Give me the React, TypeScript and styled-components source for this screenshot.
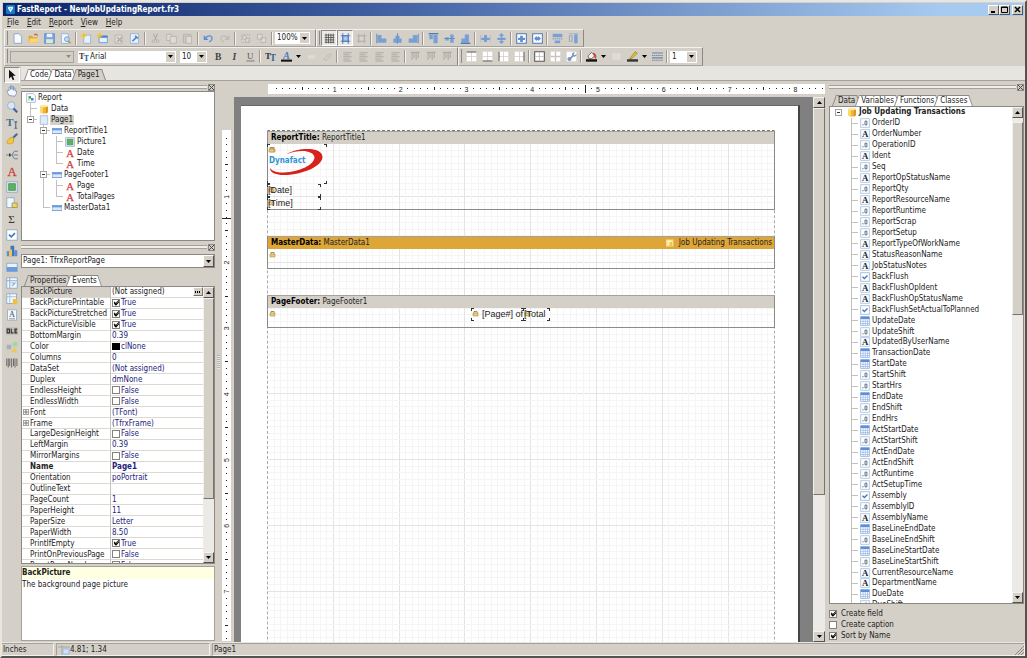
import React from 'react';
import styled, { createGlobalStyle, css } from 'styled-components';

const UI_FONT = '"DejaVu Sans Condensed", "DejaVu Sans", sans-serif';
const FACE = '#d4d0c8';
const INCH = 65.8;

const GlobalStyle = createGlobalStyle`
  *, *::before, *::after { box-sizing: border-box; }
  html, body { margin: 0; padding: 0; height: 100%; overflow: hidden; }
  body, button, input, select { font-family: ${UI_FONT}; font-size: 8px; line-height: 10px; color: #222; }
  button, select { margin: 0; padding: 0; border: 0; background: none; }
  #root { height: 100%; }
`;

/* ---------- window frame ---------- */

const Window = styled.div`
  height: 100vh;
  display: flex;
  flex-direction: column;
  background: ${FACE};
  border: 2px solid #e8e6e1;
  border-right: 2px solid #55534f;
  border-bottom: 2px solid #55534f;
  overflow: hidden;
`;

const TitleBar = styled.header`
  flex: none;
  height: 13px;
  margin: 1px 1px 0;
  padding-left: 3px;
  display: flex;
  align-items: center;
  gap: 2px;
  background: linear-gradient(90deg, #0b2569, #3c5c9f 35%, #a6caf0 92%);
`;

const WindowTitle = styled.h1`
  flex: 1;
  margin: 0;
  font-size: 8px;
  line-height: 12px;
  font-weight: bold;
  color: #fff;
`;

const CaptionButtons = styled.div`
  display: flex;
  padding-right: 1px;
`;

const CaptionButton = styled.button<{ $apart?: boolean }>`
  width: 11px;
  height: 10px;
  margin-left: ${(p) => (p.$apart ? '2px' : '0')};
  display: flex;
  align-items: center;
  justify-content: center;
  background: ${FACE};
  border: 1px solid;
  border-color: #fff #55534f #55534f #fff;
`;

const MenuBar = styled.nav`
  flex: none;
  height: 13px;
  padding-left: 5px;
  display: flex;
  align-items: center;
  gap: 8px;
  u { text-underline-offset: 1px; }
`;

/* ---------- toolbars ---------- */

const ToolbarRow = styled.div<{ $h: number }>`
  flex: none;
  height: ${(p) => p.$h}px;
  padding-left: 2px;
  display: flex;
`;

const Toolbar = styled.div`
  display: flex;
  align-items: center;
  padding: 0 2px 0 4px;
  border: 1px solid;
  border-color: #f4f2ee #8c8984 #a5a29c #f4f2ee;
  background: linear-gradient(#8c8984, #8c8984) 2px 1px / 1px 14px no-repeat;
`;

const ToolButton = styled.button<{ $down?: boolean; $off?: boolean }>`
  width: 16px;
  height: 16px;
  flex: none;
  display: flex;
  align-items: center;
  justify-content: center;
  opacity: ${(p) => (p.$off ? 0.4 : 1)};
  ${(p) =>
    p.$down &&
    css`
      background: #eceae6;
      border: 1px solid;
      border-color: #8c8984 #fff #fff #8c8984;
    `}
`;

const DropButton = styled.button`
  width: 9px;
  height: 16px;
  display: flex;
  align-items: center;
  justify-content: center;
`;

const Separator = styled.span<{ $wide?: boolean }>`
  flex: none;
  width: 2px;
  height: 13px;
  margin: ${(p) => (p.$wide ? '0 1px 0 2px' : '0 1px')};
  background: #9c9994;
  border-right: 1px solid #f4f2ee;
`;

const SelectBox = styled.span<{ $w?: number; $disabled?: boolean }>`
  flex: ${(p) => (p.$w ? 'none' : '1')};
  width: ${(p) => (p.$w ? `${p.$w}px` : 'auto')};
  height: 12px;
  margin: 0 3px 0 1px;
  display: flex;
  align-items: center;
  background: ${(p) => (p.$disabled ? FACE : '#fff')};
  border: 1px solid ${(p) => (p.$disabled ? '#a5a29c' : '#fff')};
  select {
    flex: 1;
    min-width: 0;
    height: 10px;
    padding-left: 1px;
    appearance: none;
    outline: none;
  }
`;

const SelectArrow = styled.span`
  flex: none;
  width: 9px;
  height: 10px;
  display: flex;
  align-items: center;
  justify-content: center;
  background: ${FACE};
`;

/* ---------- tabs ---------- */

const TabStrip = styled.div`
  flex: none;
  display: flex;
  align-items: flex-end;
  padding-left: 6px;
`;

const Tab = styled.button<{ $active?: boolean }>`
  position: relative;
  height: 11px;
  padding: 0 3px;
  line-height: 11px;
  z-index: 0;
  white-space: nowrap;
  &::before, &::after {
    content: '';
    position: absolute;
    z-index: -1;
    top: 0;
    bottom: 0;
    background: ${(p) => (p.$active ? FACE : '#fff')};
    border: 1px solid #8c8984;
    border-bottom: 0;
  }
  &::before { left: -1px; right: 3px; border-right: 0; transform: skewX(-20deg); }
  &::after { left: 3px; right: -1px; border-left: 0; transform: skewX(20deg); }
`;

/* ---------- body ---------- */

const Body = styled.main`
  flex: 1;
  min-height: 0;
  display: flex;
`;

const ToolColumn = styled.aside`
  flex: none;
  width: 19px;
  padding: 1px 0 0 2px;
`;

const ToolStack = styled.div`
  height: 299px;
  display: flex;
  flex-direction: column;
  justify-content: space-between;
`;

const Right = styled.div`
  flex: 1;
  min-width: 0;
  display: flex;
  flex-direction: column;
`;

const DocTabs = styled(TabStrip)`
  height: 15px;
  background: #e7e5e0;
  border-bottom: 1px solid #a5a29c;
`;

const Panels = styled.div`
  flex: 1;
  min-height: 0;
  display: flex;
  padding-right: 1px;
`;

const SidePanel = styled.section<{ $w: number }>`
  flex: none;
  width: ${(p) => p.$w}px;
  display: flex;
  flex-direction: column;
`;

const PanelSpacer = styled.div<{ $h?: number }>`
  flex: none;
  height: ${(p) => p.$h ?? 2}px;
`;

const PanelGap = styled.div`
  flex: none;
  width: 4px;
`;

const Grip = styled.div`
  flex: none;
  height: 8px;
  display: flex;
  align-items: center;
  gap: 1px;
  &::before {
    content: '';
    flex: 1;
    height: 4px;
    border-top: 1px solid #a5a29c;
    border-bottom: 1px solid #a5a29c;
    background: #f0eeea;
  }
  button {
    width: 7px;
    height: 7px;
    display: flex;
    border: 1px solid #8c8984;
    align-items: center;
    justify-content: center;
  }
`;

const Sunken = styled.div<{ $h?: number }>`
  flex: ${(p) => (p.$h ? 'none' : '1')};
  height: ${(p) => (p.$h ? `${p.$h}px` : 'auto')};
  min-height: 0;
  display: flex;
  overflow: hidden;
  background: #fff;
  border: 1px solid #8c8984;
`;

const Tree = styled.ul<{ $h?: number }>`
  flex: 1;
  height: ${(p) => (p.$h ? `${p.$h}px` : 'auto')};
  margin: 0;
  padding: 0 0 0 2px;
  list-style: none;
  display: flex;
  flex-direction: column;
`;

const TreeRow = styled.li<{ $fixed?: boolean }>`
  flex: ${(p) => (p.$fixed ? '0 0 11px' : '1 1 0')};
  min-height: 0;
  display: flex;
  align-items: center;
  white-space: nowrap;
`;

const line = 'linear-gradient(#c4c1bb, #c4c1bb)';
const guides: Record<string, string> = {
  ' ': 'none',
  v: `${line} 6px 0 / 1px 100% no-repeat`,
  t: `${line} 6px 0 / 1px 100% no-repeat, ${line} 6px 5px / 7px 1px no-repeat`,
  l: `${line} 6px 0 / 1px 6px no-repeat, ${line} 6px 5px / 7px 1px no-repeat`,
};

const Guide = styled.span<{ $kind: string }>`
  flex: none;
  width: 13px;
  align-self: stretch;
  display: flex;
  align-items: center;
  justify-content: center;
  background: ${(p) => guides[p.$kind]};
`;

const Expander = styled.button`
  width: 7px;
  height: 7px;
  display: flex;
  align-items: center;
  justify-content: center;
  background: #fff;
  border: 1px solid #a5a29c;
`;

const TreeIcon = styled.span`
  flex: none;
  width: 13px;
  display: flex;
  justify-content: center;
`;

const TreeLabel = styled.span<{ $selected?: boolean; $bold?: boolean }>`
  padding: 0 1px;
  background: ${(p) => (p.$selected ? FACE : 'transparent')};
  font-weight: ${(p) => (p.$bold ? 'bold' : 'normal')};
`;

/* ---------- inspector ---------- */

const ObjectSelect = styled(SelectBox)`
  flex: none;
  height: 14px;
  margin: 3px 0 7px;
  border: 1px solid #8c8984;
  ${SelectArrow} {
    width: 11px;
    height: 12px;
    border: 1px solid;
    border-color: #fff #55534f #55534f #fff;
  }
`;

const GridClip = styled.div`
  flex: 1;
  min-width: 0;
  overflow: hidden;
`;

const PropertyTable = styled.table`
  width: 100%;
  height: 284px;
  table-layout: fixed;
  border-collapse: separate;
  border-spacing: 0;
`;

const PropName = styled.th<{ $selected?: boolean; $bold?: boolean }>`
  width: 89px;
  padding: 0;
  text-align: left;
  line-height: 9px;
  white-space: nowrap;
  font-weight: ${(p) => (p.$bold ? 'bold' : 'normal')};
  background: ${(p) => (p.$selected ? FACE : '#fff')};
  border-bottom: 1px solid #dcd9d3;
  border-right: 1px solid #c4c1bb;
  > span { display: flex; align-items: center; }
`;

const PropGutter = styled.span`
  flex: none;
  width: 8px;
  height: 9px;
  display: flex;
  align-items: center;
  padding-left: 1px;
`;

const PlusBox = styled(Expander)`
  width: 6px;
  height: 6px;
`;

const PropValue = styled.td<{ $selected?: boolean; $bold?: boolean }>`
  padding: 0 0 0 1px;
  line-height: 9px;
  white-space: nowrap;
  color: ${(p) => (p.$selected ? '#222' : '#23237c')};
  font-weight: ${(p) => (p.$bold ? 'bold' : 'normal')};
  border-bottom: 1px solid #dcd9d3;
  > span { display: flex; align-items: center; gap: 1px; }
`;

const Ellipsis = styled.button`
  width: 10px;
  height: 9px;
  margin-left: auto;
  display: flex;
  align-items: center;
  justify-content: center;
  background: ${FACE};
  border: 1px solid;
  border-color: #fff #77746f #77746f #fff;
`;

const Swatch = styled.i`
  width: 8px;
  height: 7px;
  background: #000;
`;

const Check = styled.input`
  position: relative;
  flex: none;
  appearance: none;
  width: 8px;
  height: 8px;
  margin: 0;
  background: #fff;
  border: 1px solid #85827d;
  &:checked::after {
    content: '';
    position: absolute;
    left: 1px;
    top: 0;
    width: 5px;
    height: 3px;
    border-left: 1px solid #000;
    border-bottom: 1px solid #000;
    transform: rotate(-48deg);
    box-shadow: -1px 1px 0 0 #000;
  }
`;

const Hint = styled.div`
  flex: none;
  height: 75px;
  margin: 2px 0 1px;
  background: #fff;
  border: 1px solid #a5a29c;
  h2 {
    margin: 0;
    height: 12px;
    font-size: 8px;
    line-height: 12px;
    background: #ffffe1;
  }
  p { margin: 0; line-height: 11px; }
`;

/* ---------- scroll bar ---------- */

const ScrollTrack = styled.div<{ $w: number }>`
  flex: none;
  width: ${(p) => p.$w}px;
  display: flex;
  flex-direction: column;
  background: #eceae6;
`;

const ScrollButton = styled.button`
  flex: none;
  height: 11px;
  display: flex;
  align-items: center;
  justify-content: center;
  background: ${FACE};
  border: 1px solid;
  border-color: #f4f2ee #55534f #55534f #f4f2ee;
`;

const ScrollThumb = styled.div<{ $top: number; $size: number }>`
  flex: ${(p) => `0 0 ${p.$size}%`};
  margin-top: ${(p) => p.$top}px;
  background: ${FACE};
  border: 1px solid;
  border-color: #f4f2ee #77746f #77746f #f4f2ee;
`;

const ScrollRest = styled.div`
  flex: 1;
`;

/* ---------- designer ---------- */

const Splitter = styled.div`
  flex: none;
  width: 7px;
  display: flex;
  align-items: center;
  justify-content: center;
  &::before {
    content: '';
    width: 3px;
    height: 14px;
    background: repeating-linear-gradient(#b5b2ac 0 1px, #e8e6e1 1px 2px);
  }
`;

const Designer = styled.section`
  flex: 1;
  min-width: 0;
  display: flex;
  flex-direction: column;
  padding: 3px 0 0;
`;

const HRuler = styled.div`
  flex: none;
  height: 10px;
  margin: 0 0 3px 46px;
  background: #fff;
  overflow: hidden;
`;

const DesignerBody = styled.div`
  flex: 1;
  min-height: 0;
  display: flex;
`;

const VRuler = styled.div`
  flex: none;
  width: 9px;
  margin: 33px 3px 1px 0;
  background: #fff;
  overflow: hidden;
`;

const Workspace = styled.div`
  flex: 1;
  min-width: 0;
  padding: 8px 0 0 7px;
  background: #808080;
  overflow: hidden;
`;

const Paper = styled.article`
  width: 559px;
  height: 724px;
  padding: 24px 25px 25px 26px;
  background: #fff;
  border-right: 2px solid #444;
  border-top: 1px solid #666;
`;

const Printable = styled.div`
  position: relative;
  width: 508px;
  height: 670px;
  border: 1px dashed #aaa;
  border-top-color: #777;
`;

const GridLines = styled.svg`
  position: absolute;
  inset: 0;
  width: 100%;
  height: 100%;
`;

const BandStack = styled.div`
  position: relative;
  display: flex;
  flex-direction: column;
  gap: 26px;
  margin: 0 -1px;
`;

const BandBox = styled.section<{ $h: number }>`
  height: ${(p) => p.$h}px;
  border: 1px solid #8a8a8a;
  border-top-color: #a5a29c;
`;

const BandHeader = styled.header<{ $master?: boolean }>`
  height: 12px;
  padding: 0 2px 0 3px;
  display: flex;
  align-items: center;
  line-height: 12px;
  background: ${(p) => (p.$master ? '#dea636' : FACE)};
  b { color: #000; }
`;

const BandData = styled.span`
  margin-left: auto;
  display: flex;
  align-items: center;
  gap: 5px;
`;

const BandBody = styled.div`
  position: relative;
`;

const k = 'linear-gradient(#333, #333)';
const ReportObject = styled.div<{ $x: number; $y: number; $w: number; $h: number }>`
  position: absolute;
  left: ${(p) => p.$x}px;
  top: ${(p) => p.$y}px;
  width: ${(p) => p.$w}px;
  height: ${(p) => p.$h}px;
  font-family: "Liberation Sans", Arial, sans-serif;
  font-size: 9px;
  line-height: 13px;
  white-space: nowrap;
  background:
    ${k} 0 0 / 3px 1px, ${k} 0 0 / 1px 3px,
    ${k} 100% 0 / 3px 1px, ${k} 100% 0 / 1px 3px,
    ${k} 0 100% / 3px 1px, ${k} 0 100% / 1px 3px,
    ${k} 100% 100% / 3px 1px, ${k} 100% 100% / 1px 3px;
  background-repeat: no-repeat;
`;

const ObjectText = styled.span<{ $pad: number }>`
  position: relative;
  display: block;
  padding-left: ${(p) => p.$pad}px;
`;

const LockMark = styled.svg`
  position: absolute;
  left: 1px;
  top: 2px;
`;

/* ---------- right panel ---------- */

const Options = styled.div`
  flex: none;
  padding: 4px 0 1px;
  display: flex;
  flex-direction: column;
`;

const Option = styled.label`
  height: 11px;
  display: flex;
  align-items: center;
  gap: 4px;
`;

/* ---------- status bar ---------- */

const StatusBar = styled.footer`
  flex: none;
  height: 14px;
  display: flex;
  align-items: stretch;
  gap: 2px;
  border-top: 1px solid #e8e6e1;
`;

const StatusCell = styled.div<{ $w?: number }>`
  flex: ${(p) => (p.$w ? 'none' : '1')};
  width: ${(p) => (p.$w ? `${p.$w}px` : 'auto')};
  display: flex;
  align-items: center;
  padding-left: 1px;
  border: 1px solid;
  border-color: #a5a29c #f4f2ee #f4f2ee #a5a29c;
  &:first-child { border-left: 0; }
`;

const Sizer = styled.svg`
  margin-left: auto;
  align-self: flex-end;
`;

/* ---------- icons ---------- */

const B = '#5b8fdc';
const L = '#a9c8f2';
const G = '#77746f';
const SERIF = 'Liberation Serif, serif';

const art: Record<string, React.ReactNode> = {
  app: <><rect width="16" height="16" rx="2" fill="#1878c8" /><path d="M3 5l2-2h6l2 2-5 8z" fill="#fff" /><path d="M5 5h6L8 9z" fill="#6bd0f5" /></>,
  page: <path d="M3 1h7l4 4v10H3z" fill="#f5faff" stroke="#6f93bf" />,
  open: <><path d="M1 4h5l1 2h7v8H1z" fill="#e2a73a" /><path d="M3 8h13l-3 6H1z" fill="#ffd66e" /><path d="M9 3c2-2 4-1 5 1" stroke="#d06f28" strokeWidth="2" fill="none" /></>,
  save: <><path d="M1 1h14v14H1z" fill="#78a9e6" stroke="#4b7cbd" /><path d="M4 1h8v5H4z" fill="#e9f3ff" /><path d="M3 9h10v6H3z" fill="#d9ead0" /></>,
  preview: <><path d="M2 1h10v14H2z" fill="#eef6ff" stroke="#7fa3cf" /><circle cx="10" cy="9" r="3.500" fill="#bcdcff" stroke="#6688aa" /><path d="M12.500 12l3 3" stroke="#c08a30" strokeWidth="2" /></>,
  newpage: <><path d="M4 3h10v12H4z" fill="#e6f1ff" stroke="#7fa3cf" /><path d="M4 0l1 3 3 1-3 1-1 3-1-3-3-1 3-1z" fill="#f5c518" stroke="#f5c518" /></>,
  newdlg: <><path d="M3 4h12v10H3z" fill="#e6f1ff" stroke="#4e84cf" /><path d="M3 4h12v3H3z" fill="#4e84cf" /><path d="M4 0l1 3 3 1-3 1-1 3-1-3-3-1 3-1z" fill="#f5c518" stroke="#f5c518" /></>,
  delpage: <><path d="M3 3h10v12H3z" fill="#eee" stroke={G} /><path d="M6 6l7 7M13 6l-7 7" stroke={G} strokeWidth="2" /></>,
  pageset: <><path d="M2 1h12v14H2z" fill="#e6f1ff" stroke="#86a5cc" /><path d="M5 12l6-6M9 4l4 4" stroke="#5c84b8" strokeWidth="2.500" /></>,
  cut: <><path d="M5 1l4 9M11 1L7 10" stroke={G} strokeWidth="1.500" /><circle cx="5" cy="12" r="2" fill="none" stroke={G} /><circle cx="11" cy="12" r="2" fill="none" stroke={G} /></>,
  copy: <><path d="M1 2h8v9H1z" fill="#eee" stroke={G} /><path d="M6 5h9v10H6z" fill="#eee" stroke={G} /></>,
  paste: <><path d="M2 2h11v12H2z" fill="#bbb" stroke={G} /><path d="M6 5h8v10H6z" fill="#eee" stroke={G} /></>,
  undo: <><path d="M4 7c3-4 10-4 9 2-.5 2-2 3-4 4" stroke={B} strokeWidth="2" fill="none" /><path d="M1 3v7h7z" fill={B} /></>,
  redo: <><path d="M12 7c-3-4-10-4-9 2 .5 2 2 3 4 4" stroke={G} strokeWidth="2" fill="none" opacity=".5" /><path d="M15 3v7H8z" fill={G} opacity=".5" /></>,
  group: <><path d="M2 2h12v12H2z" fill="none" stroke={G} strokeDasharray="2 2" /><path d="M4 4h5v5H4zM8 8h5v5H8z" fill="#eee" stroke={G} /></>,
  ungroup: <><path d="M2 2h7v7H2zM7 7h7v7H7z" fill="#eee" stroke={G} /></>,
  grid: <path d="M1 3h14M1 6.500h14M1 10h14M1 13.500h14M3 1v14M6.500 1v14M10 1v14M13.500 1v14" stroke="#555" strokeWidth="1.300" />,
  snap: <><path d="M4 4h8v8H4z" fill={L} stroke="#4472b8" /><path d="M1 4h14M1 12h14M4 0v16M12 0v16" stroke="#4472b8" strokeWidth="1.200" /></>,
  fit: <path d="M4 4h8v8H4zM1 4h14M1 12h14M4 1v14M12 1v14" fill="#ddd" stroke={G} />,
  aleft: <><path d="M1 1v14" stroke="#5478ac" /><path d="M2 3h6v5h7v6H2z" fill={B} opacity=".75" /></>,
  acenter: <><path d="M8 0v16" stroke="#5478ac" /><path d="M5 4h6v4h3v6H2V8h3z" fill={B} opacity=".75" /></>,
  aright: <><path d="M15 1v14" stroke="#5478ac" /><path d="M7 3h7v11H1V8h6z" fill={B} opacity=".75" /></>,
  atop: <><path d="M1 1h14" stroke="#5478ac" strokeWidth="2" /><path d="M2 3h5v6H2zM8 3h6v12H8z" fill={B} opacity=".75" /></>,
  amiddle: <><path d="M0 8h16" stroke="#5478ac" /><path d="M2 6h5v5H2zM9 2h5v12H9z" fill={B} opacity=".75" /></>,
  abottom: <><path d="M1 15h14" stroke="#5478ac" strokeWidth="2" /><path d="M2 8h5v6H2zM7 2h6v12H7z" fill={B} opacity=".75" /></>,
  hspace: <><path d="M1 3v10M15 3v10" stroke="#8aa6d0" strokeDasharray="2 1" /><path d="M6 3h4v10H6zM2 7h12v3H2z" fill={B} opacity=".8" /></>,
  vspace: <path d="M8 0l4 4H9v3h5v3H9v2h3l-4 4-4-4h3v-2H2V7h5V4H4z" fill={B} opacity=".8" />,
  hcenter: <><path d="M1 1h14v14H1z" fill="#fff" stroke="#5478ac" strokeWidth="1.500" /><path d="M6 4h4v3h3v3h-3v3H6v-3H3V7h3z" fill={B} /></>,
  vcenter: <><path d="M1 1h14v14H1z" fill="#fff" stroke="#5478ac" strokeWidth="1.500" /><path d="M3 8l4-4v2h2V4l4 4-4 4v-2H7v2z" fill={B} /></>,
  samew: <><path d="M1 1h14v5H1zM4 11h8v4H4z" fill={B} opacity=".75" /><path d="M1 8.500h14" stroke="#5478ac" strokeDasharray="2 1" /></>,
  sameh: <><path d="M9 2h5v13H9z" fill={B} opacity=".75" /><path d="M2 4h4v8H2z" fill="none" stroke="#5478ac" strokeDasharray="2 1" /><path d="M1 1h14" stroke="#8aa6d0" /></>,
  tt: <g fontFamily={SERIF} fontWeight="bold"><text x="0" y="11" fontSize="13" fill="#333">T</text><text x="7" y="15" fontSize="14" fill="#3f6290">T</text></g>,
  bold: <text x="3" y="13" fontSize="14" fontWeight="bold" fontFamily={SERIF} fill="#444">B</text>,
  italic: <text x="5" y="13" fontSize="14" fontWeight="bold" fontStyle="italic" fontFamily={SERIF} fill="#444">I</text>,
  under: <><text x="3" y="12" fontSize="13" fontFamily={SERIF} fill="#555">U</text><path d="M2 14.500h12" stroke="#555" /></>,
  fontcolor: <><text x="3" y="12" fontSize="15" fontWeight="bold" fontStyle="italic" fontFamily={SERIF} fill="#4b7cbd">A</text><path d="M0 12.500h16v3H0z" fill="#111" /></>,
  highlight: <path d="M3 6h10v5H3z" fill="#eee" />,
  rotate: <path d="M3 12l8-8 2 2-7 8z" fill="#ddd" stroke={G} />,
  lines: <path d="M2 2.500h12M2 5.500h9M2 8.500h12M2 11.500h9M2 14.500h12" stroke={G} strokeWidth="1.500" />,
  vlines: <path d="M3 2v11M6 2v8M9 2v11M12 2v8M1 2h13" stroke={G} strokeWidth="1.500" />,
  ftop: <><path d="M1 1h14v14H1z" fill="#fff" /><path d="M8 1v14M1 8h14" stroke="#c9c5bd" /><path d="M1 1.500h14" stroke="#555" strokeWidth="1.500" /></>,
  fbottom: <><path d="M1 1h14v14H1z" fill="#fff" /><path d="M8 1v14M1 8h14" stroke="#c9c5bd" /><path d="M1 14.500h14" stroke="#555" strokeWidth="1.500" /></>,
  fleft: <><path d="M1 1h14v14H1z" fill="#fff" /><path d="M8 1v14M1 8h14" stroke="#c9c5bd" /><path d="M1.500 1v14" stroke="#555" strokeWidth="1.500" /></>,
  fright: <><path d="M1 1h14v14H1z" fill="#fff" /><path d="M8 1v14M1 8h14" stroke="#c9c5bd" /><path d="M14.500 1v14" stroke="#555" strokeWidth="1.500" /></>,
  fall: <><path d="M1 1h14v14H1z" fill="#fff" stroke="#555" strokeWidth="1.500" /><path d="M8 2v12M2 8h12" stroke="#b5b2ac" /></>,
  fnone: <><path d="M1 1h14v14H1z" fill="#fff" /><path d="M8 1v14M1 8h14" stroke="#c9c5bd" strokeWidth="2" /></>,
  fedit: <><path d="M1 1h14v14H1z" fill="#fff" /><path d="M2 12a3 3 0 0 1 4-3l3-3a3 3 0 0 1 4-4l-2 3 2 1 2-2a3 3 0 0 1-4 4l-3 3a3 3 0 0 1-6 1z" fill="#7b97c0" /></>,
  fill: <><path d="M3 7l5-5 5 5-5 4H4z" fill="#eee" stroke="#444" /><path d="M11 3c3 1 4 4 3 8l-2-4z" fill="#d33a2f" stroke="#d33a2f" /><path d="M0 12h16v3.500H0z" fill="#111" /></>,
  fillmore: <path d="M2 3h12v10H2z" fill="#eee" />,
  linecolor: <><path d="M4 11l8-10 3 2-8 8z" fill="#e8c530" stroke="#8c7420" /><path d="M0 12h16v3.500H0z" fill="#333" /></>,
  linestyle: <><path d="M0 3h16M0 10h16" stroke="#6d82a3" strokeWidth="1.500" /><path d="M0 6.500h16M0 13.500h16" stroke="#6d82a3" strokeWidth="1.500" strokeDasharray="2 1" /></>,
  select: <path d="M4 1v12l3-3 2 5 2-1-2-5h4z" fill="#111" />,
  hand: <path d="M4 14L1 8l2-1 1 1V3h2v3-5h2v5-4h2v5-3h2v4h2v3l-2 4z" fill="#f4f8fd" stroke="#6d8cb5" />,
  zoom: <><circle cx="7" cy="6" r="5" fill="#d5e8fb" stroke="#8fa3bb" /><path d="M10 10l5 5" stroke="#3e64a0" strokeWidth="3" /></>,
  textedit: <><text x="0" y="12" fontSize="15" fontWeight="bold" fontFamily={SERIF} fill="#4a6d94">T</text><path d="M11 6.500h4M13 6v9M11 15h4" stroke="#4a6d94" strokeWidth="1.500" /></>,
  brush: <><path d="M15 1L9 7" stroke="#4668a8" strokeWidth="3" /><path d="M10 6c-5-1-8 3-9 7 2 2 8 2 9-1z" fill="#f0c744" stroke="#c69a26" /></>,
  band: <><path d="M0 8h8M8 8l3-5h5M8 8l3 5h5M10 8h6" stroke="#6b7f9a" strokeWidth="1.300" fill="none" /><path d="M5 6v4" stroke="#333" strokeWidth="2" /></>,
  text: <text x="2" y="14" fontSize="17" fontFamily={SERIF} fill="#d03c3c" stroke="#d03c3c" strokeWidth=".4">A</text>,
  picture: <><path d="M1 1h14v14H1z" fill="#e6f0fa" stroke="#7f9fbf" /><path d="M3.500 3.500h9v9h-9z" fill="#5fb063" stroke="#3f8f4a" /></>,
  subreport: <><path d="M1 1h10v13H1z" fill="#eef6ff" stroke="#7f9fbf" /><path d="M8 8h7v6H8z" fill="#e8d36e" stroke="#a08e42" /></>,
  sum: <text x="3" y="13" fontSize="15" fontFamily={SERIF} fill="#333">Σ</text>,
  check: <><path d="M1 1h14v14H1z" fill="#fbfdff" stroke="#7f9fbf" /><path d="M4 7.500l3 3 5-5" stroke="#3f76c4" strokeWidth="2" fill="none" /></>,
  chart: <><path d="M1 8h4v7H1z" fill="#5b8fdc" /><path d="M6 1h5v14H6z" fill="#3f76c4" /><path d="M4 6h4v9H4z" fill="#f0c744" /><path d="M11 7h4v8h-4z" fill="#5b8fdc" /></>,
  rich: <><path d="M1 3h14v11H1z" fill="#e9f2ff" stroke="#7f9fbf" /><path d="M1 8h14v6H1z" fill="#6d9be0" /></>,
  cross: <><path d="M1 1h14v14H1z" fill="#f2f8ff" stroke="#7f9fbf" /><path d="M1 5h14M5 1v14M7 8h6M8 12l4-4" stroke="#8fb0d4" strokeWidth="1.500" /></>,
  dbcross: <><path d="M1 1h13v13H1z" fill="#f2f8ff" stroke="#7f9fbf" /><path d="M1 5h13M5 1v13" stroke="#8fb0d4" /><path d="M9 8h6v7H9z" fill="#f0bf3e" /></>,
  richtext: <><path d="M2 1h12v14H2z" fill="#f2f8ff" stroke="#8aa6c4" /><text x="4" y="11" fontSize="11" fontFamily={SERIF} fill="#444">A</text><path d="M4 13h8" stroke="#777" /></>,
  ole: <><path d="M0 3h16v10H0z" fill="#c0bcb5" /><path d="M1.500 5.500h3v5h-3zM7 5v5.500h3M15 5.500h-3v5h3M12 8h2.500" stroke="#333" strokeWidth="1.500" fill="none" /></>,
  shapes: <><path d="M1 5h6v6H1z" fill="#a5b0bb" /><circle cx="12" cy="4" r="3.500" fill="#a8d6a0" /><path d="M11 8l4 7H7z" fill="#ecc95a" /></>,
  barcode: <path d="M1 2v10M3 2v12M5 2v10M7.500 2v12M10 2v10M12 2v12M14.500 2v10" stroke="#666" strokeWidth="1.300" />,
  report: <><path d="M1 1h11l3 3v11H1z" fill="#fbfdff" stroke="#7f9fbf" /><path d="M4 5h4v4H4z" fill="#3fa05a" /><path d="M8 8h4v4H8z" fill="#4a7fd0" /><path d="M3 10h3v2H3z" fill="#e8c040" /></>,
  data: <><path d="M2 3v10c0 3 12 3 12 0V3z" fill="#f2b530" /><path d="M2 3h4v12c-2 0-4-1-4-2z" fill="#ffdc70" /><path d="M11 4h3v9c-1 1-2 1.500-3 2z" fill="#d4901a" /><ellipse cx="8" cy="3" rx="6" ry="2" fill="#ffe9a0" /></>,
  bluepage: <path d="M2 1h12v14H2z" fill="#dfeafa" stroke="#8aa6cf" />,
  bandnode: <><path d="M0 4h16v8H0z" fill="#dce9fa" stroke="#4a73b8" /><path d="M0 4h16v3H0z" fill="#6d9be0" /></>,
  num: <><path d="M1 1h14v14H1z" fill="#fbfdff" stroke="#8fb0d4" /><path d="M4 10h1.500v1.500H4z" fill="#345" /><path d="M8 5h3v6H8z" fill="none" stroke="#456" strokeWidth="1.300" /></>,
  str: <><path d="M1 1h14v14H1z" fill="#fbfdff" stroke="#8fb0d4" /><text x="3" y="13" fontSize="14" fontWeight="bold" fontFamily={SERIF} fill="#1c2433">A</text></>,
  date: <><path d="M1 1h14v14H1z" fill="#fff" stroke="#6f96d0" /><path d="M1 1h14v4H1z" fill="#5b8fdc" /><path d="M1 8.500h14M1 12h14M5 5v10M8.500 5v10M12 5v10" stroke="#8fb0e0" /></>,
  cyl: <><path d="M0 1h15v14H0z" fill="#f6dc94" /><path d="M3 3h8v10H3z" fill="#fff3c4" /><path d="M7 6h5v8H7z" fill="#f0c744" /></>,
};

const Icon = ({ name, size = 11 }: { name: string; size?: number }) => (
  <svg width={size} height={size} viewBox="0 0 16 16" aria-hidden="true">
    {art[name]}
  </svg>
);

const Arrow = ({ up, dim }: { up?: boolean; dim?: boolean }) => (
  <svg width="5" height="3" viewBox="0 0 5 3" aria-hidden="true">
    <path d={up ? 'M0 3h5L2.500 0z' : 'M0 0h5L2.500 3z'} fill={dim ? '#8c8984' : '#000'} />
  </svg>
);

const Lock = () => (
  <LockMark width="7" height="7" viewBox="0 0 7 7" aria-hidden="true">
    <path d="M2 3V1.500h3V3" stroke="#a88a50" fill="none" />
    <path d="M1 3h5v3H1z" fill="#ecc878" stroke="#b08f4c" strokeWidth=".6" />
  </LockMark>
);

/* ---------- composed parts ---------- */

const Tools = ({ items, wide }: { items: string[]; wide?: boolean }) => (
  <>
    {items.map((item, i) => {
      if (item === '|') return <Separator key={i} $wide={wide} />;
      if (item === 'v') return <DropButton key={i} aria-label="More colours"><Arrow /></DropButton>;
      const name = item.replace(/[-+]/, '');
      return (
        <ToolButton key={i} aria-label={name} $off={item.startsWith('-')} $down={item.startsWith('+')}>
          <Icon name={name} />
        </ToolButton>
      );
    })}
  </>
);

const Combo = ({ label, value, w, disabled, icon }: { label: string; value: string; w: number; disabled?: boolean; icon?: string }) => (
  <SelectBox $w={w} $disabled={disabled}>
    {icon && <Icon name={icon} size={10} />}
    <select aria-label={label} disabled={disabled}>
      <option>{value}</option>
    </select>
    <SelectArrow><Arrow dim={disabled} /></SelectArrow>
  </SelectBox>
);

const ScrollBar = ({ w, top = 0, size }: { w: number; top?: number; size: number }) => (
  <ScrollTrack $w={w}>
    <ScrollButton aria-label="Scroll up"><Arrow up /></ScrollButton>
    <ScrollThumb $top={top} $size={size} />
    <ScrollRest />
    <ScrollButton aria-label="Scroll down"><Arrow /></ScrollButton>
  </ScrollTrack>
);

const PanelGrip = () => (
  <Grip>
    <button aria-label="Close panel">
      <svg width="5" height="5" viewBox="0 0 5 5"><path d="M0 0l5 5M5 0L0 5" stroke="#444" /></svg>
    </button>
  </Grip>
);

const Tabs = ({ items, active }: { items: string[]; active: string }) => (
  <>
    {items.map((t) => <Tab key={t} $active={t === active}>{t}</Tab>)}
  </>
);

type Node = { guide: string; icon: string; label: string; open?: boolean; selected?: boolean; bold?: boolean };

const TreeItem = ({ node, fixed }: { node: Node; fixed?: boolean }) => (
  <TreeRow $fixed={fixed}>
    {node.guide.split('').map((g, i) => (
      <Guide key={i} $kind={g}>
        {node.open && i === node.guide.length - 1 && (
          <Expander aria-label={`Collapse ${node.label}`}>
            <svg width="5" height="5"><path d="M1 2.500h3" stroke="#333" /></svg>
          </Expander>
        )}
      </Guide>
    ))}
    <TreeIcon><Icon name={node.icon} size={10} /></TreeIcon>
    <TreeLabel $selected={node.selected} $bold={node.bold}>{node.label}</TreeLabel>
  </TreeRow>
);

const reportTree: Node[] = [
  { guide: '', icon: 'report', label: 'Report' },
  { guide: 't', icon: 'data', label: 'Data' },
  { guide: 'l', icon: 'bluepage', label: 'Page1', open: true, selected: true },
  { guide: ' t', icon: 'bandnode', label: 'ReportTitle1', open: true },
  { guide: ' vt', icon: 'picture', label: 'Picture1' },
  { guide: ' vt', icon: 'text', label: 'Date' },
  { guide: ' vl', icon: 'text', label: 'Time' },
  { guide: ' t', icon: 'bandnode', label: 'PageFooter1', open: true },
  { guide: ' vt', icon: 'text', label: 'Page' },
  { guide: ' vl', icon: 'text', label: 'TotalPages' },
  { guide: ' l', icon: 'bandnode', label: 'MasterData1' },
];

const fields = `num OrderID,str OrderNumber,num OperationID,str Ident,num Seq,str ReportOpStatusName,num ReportQty,str ReportResourceName,num ReportRuntime,num ReportScrap,num ReportSetup,str ReportTypeOfWorkName,str StatusReasonName,str JobStatusNotes,check BackFlush,str BackFlushOpIdent,str BackFlushOpStatusName,check BackFlushSetActualToPlanned,date UpdateDate,num UpdateShift,str UpdatedByUserName,date TransactionDate,date StartDate,num StartShift,num StartHrs,date EndDate,num EndShift,num EndHrs,date ActStartDate,num ActStartShift,date ActEndDate,num ActEndShift,num ActRuntime,num ActSetupTime,check Assembly,num AssemblyID,str AssemblyName,date BaseLineEndDate,num BaseLineEndShift,date BaseLineStartDate,num BaseLineStartShift,str CurrentResourceName,str DepartmentName,date DueDate,num DueShift`
  .split(',')
  .map((f) => f.split(' '));

const dataTree: Node[] = [
  { guide: ' ', icon: 'data', label: 'Job Updating Transactions', open: true, bold: true },
  ...fields.map(([icon, label]) => ({ guide: ' t', icon, label })),
];

type Prop = [name: string, value: string | boolean, expandable?: boolean];
const properties: Prop[] = [
  ['BackPicture', '(Not assigned)'],
  ['BackPicturePrintable', true],
  ['BackPictureStretched', true],
  ['BackPictureVisible', true],
  ['BottomMargin', '0.39'],
  ['Color', 'clNone'],
  ['Columns', '0'],
  ['DataSet', '(Not assigned)'],
  ['Duplex', 'dmNone'],
  ['EndlessHeight', false],
  ['EndlessWidth', false],
  ['Font', '(TFont)', true],
  ['Frame', '(TfrxFrame)', true],
  ['LargeDesignHeight', false],
  ['LeftMargin', '0.39'],
  ['MirrorMargins', false],
  ['Name', 'Page1'],
  ['Orientation', 'poPortrait'],
  ['OutlineText', ''],
  ['PageCount', '1'],
  ['PaperHeight', '11'],
  ['PaperSize', 'Letter'],
  ['PaperWidth', '8.50'],
  ['PrintIfEmpty', true],
  ['PrintOnPreviousPage', false],
  ['ResetPageNumbers', false],
];

const PropertyRow = ({ item: [name, value, expandable] }: { item: Prop }) => {
  const selected = name === 'BackPicture';
  const bold = name === 'Name';
  return (
    <tr>
      <PropName scope="row" $selected={selected} $bold={bold}>
        <span>
          <PropGutter>
            {expandable && (
              <PlusBox aria-label={`Expand ${name}`}>
                <svg width="4" height="4"><path d="M0 2h4M2 0v4" stroke="#777" /></svg>
              </PlusBox>
            )}
          </PropGutter>
          {name}
        </span>
      </PropName>
      <PropValue $selected={selected} $bold={bold}>
        <span>
          {typeof value === 'boolean' && <Check type="checkbox" aria-label={name} defaultChecked={value} />}
          {name === 'Color' && <Swatch />}
          {typeof value === 'boolean' ? (value ? 'True' : 'False') : value}
          {selected && (
            <Ellipsis aria-label="Choose picture">
              <svg width="6" height="2"><path d="M0 1h6" stroke="#000" strokeWidth="2" strokeDasharray="1 1" /></svg>
            </Ellipsis>
          )}
        </span>
      </PropValue>
    </tr>
  );
};

const Ruler = ({ vertical, cursor, tenths }: { vertical?: boolean; cursor: number; tenths: number }) => {
  const marks = Array.from({ length: tenths }, (_, i) => i + 1);
  return (
    <svg width="100%" height="100%" aria-hidden="true" fontFamily="Liberation Sans, Arial, sans-serif" fontSize="7" fill="#222">
      {marks.map((m) => {
        const p = 1 + (m * INCH) / 10;
        if (m % 10 === 0) {
          return vertical ? (
            <text key={m} transform={`translate(7 ${p}) rotate(-90)`} textAnchor="middle">{m / 10}</text>
          ) : (
            <text key={m} x={p} y="8" textAnchor="middle">{m / 10}</text>
          );
        }
        const len = m % 5 === 0 ? 3 : 1;
        return vertical ? (
          <rect key={m} x={(9 - len) / 2} y={Math.round(p)} width={len} height="1" />
        ) : (
          <rect key={m} x={Math.round(p)} y={(9 - len) / 2} width="1" height={len} />
        );
      })}
      {vertical ? <rect x="0" y={cursor} width="9" height="1" /> : <rect x={cursor} y="1" width="1" height="8" />}
    </svg>
  );
};

const Grid = () => {
  const tenths = Array.from({ length: 102 }, (_, i) => i + 1);
  return (
    <GridLines aria-hidden="true">
      {tenths.map((t) => {
        const p = Math.round((t * INCH) / 10);
        const c = t % 10 === 0 ? '#e4e4e4' : '#f5f5f5';
        return (
          <g key={t} fill={c}>
            <rect x={p - 1} y="0" width="1" height="100%" />
            <rect x="0" y={p - 1} width="100%" height="1" />
          </g>
        );
      })}
    </GridLines>
  );
};

const Band = ({ kind, name, h, source, children }: { kind: string; name: string; h: number; source?: string; children?: React.ReactNode }) => (
  <BandBox $h={h}>
    <BandHeader $master={!!source}>
      <span><b>{kind}:</b> {name}</span>
      {source && <BandData><Icon name="cyl" size={8} />{source}</BandData>}
    </BandHeader>
    <BandBody>
      <Lock />
      {children}
    </BandBody>
  </BandBox>
);

const Dynafact = () => (
  <svg width="60" height="40" viewBox="0 0 60 40" role="img" aria-label="Dynafact">
    <path d="M20 10C30 4 55 2 55.500 13 55 24 30 32 14 31 7 30 3 28 3 24c3 4 9 5 14 4.500C32 28 47 21 47.500 13.500 47 6 32 5 20 10z" fill="#d8201c" />
    <text x="2" y="19" fontFamily="DejaVu Sans Condensed, sans-serif" fontWeight="bold" fontSize="8" fill="#2e93d1">Dynafact</text>
  </svg>
);

const sideTools = ['select', 'hand', 'zoom', 'textedit', 'brush', 'band', 'text', 'picture', 'subreport', 'sum', 'check', 'chart', 'rich', 'cross', 'dbcross', 'richtext', 'ole', 'shapes', 'barcode'];

export default function App() {
  return (
    <Window>
      <GlobalStyle />
      <TitleBar>
        <Icon name="app" size={9} />
        <WindowTitle>FastReport - NewJobUpdatingReport.fr3</WindowTitle>
        <CaptionButtons>
          <CaptionButton aria-label="Minimize"><svg width="7" height="7"><path d="M1 6h4" stroke="#000" strokeWidth="2" /></svg></CaptionButton>
          <CaptionButton aria-label="Maximize"><svg width="7" height="7"><path d="M.5 1h6v5.500h-6zM.5 1.500h6" stroke="#000" fill="none" /></svg></CaptionButton>
          <CaptionButton $apart aria-label="Close"><svg width="7" height="7"><path d="M1 1l5 5M6 1L1 6" stroke="#000" strokeWidth="1.500" /></svg></CaptionButton>
        </CaptionButtons>
      </TitleBar>

      <MenuBar>
        {['File', 'Edit', 'Report', 'View', 'Help'].map((m) => (
          <button key={m}><u>{m[0]}</u>{m.slice(1)}</button>
        ))}
      </MenuBar>

      <ToolbarRow $h={18}>
        <Toolbar>
          <Tools wide items={['page', 'open', 'save', 'preview', '|', 'newpage', 'newdlg', '-delpage', 'pageset', '|', '-cut', '-copy', '-paste', '|', 'undo', '-redo', '|', '-group', '-ungroup', '|']} />
          <Combo label="Zoom" value="100%" w={35} />
        </Toolbar>
        <Toolbar>
          <Tools items={['+grid', '+snap', '-fit', '|', 'aleft', 'acenter', 'aright', '|', 'atop', 'amiddle', 'abottom', '|', 'hspace', 'vspace', '|', 'hcenter', 'vcenter', '|', 'samew', 'sameh']} />
        </Toolbar>
      </ToolbarRow>
      <ToolbarRow $h={19}>
        <Toolbar>
          <Combo label="Style" value="" w={64} disabled />
          <Combo label="Font name" value="Arial" w={98} icon="tt" />
          <Combo label="Font size" value="10" w={27} />
          <Tools items={['bold', 'italic', 'under', '|', 'tt', 'fontcolor', 'v', '-highlight', '-rotate', '|', '-lines', '-lines', '-lines', '-lines', '|', '-vlines', '-vlines', '-vlines']} />
        </Toolbar>
        <Toolbar>
          <Tools items={['ftop', 'fbottom', 'fleft', 'fright', '|', 'fall', 'fnone', 'fedit', '|', 'fill', 'v', '-fillmore', 'linecolor', 'v', 'linestyle', '|']} />
          <Combo label="Line width" value="1" w={27} />
        </Toolbar>
      </ToolbarRow>

      <Body>
        <ToolColumn>
          <ToolStack>
            {sideTools.map((t, i) => (
              <ToolButton key={t} aria-label={t} $down={i === 0}><Icon name={t} size={12} /></ToolButton>
            ))}
          </ToolStack>
        </ToolColumn>

        <Right>
          <DocTabs>
            <Tabs items={['Code', 'Data', 'Page1']} active="Page1" />
          </DocTabs>
          <Panels>
            <SidePanel $w={194}>
              <PanelSpacer />
              <PanelGrip />
              <Sunken $h={150}>
                <Tree>
                  {reportTree.map((n) => <TreeItem key={n.label} node={n} fixed />)}
                </Tree>
              </Sunken>
              <PanelSpacer />
              <PanelGrip />
              <ObjectSelect>
                <select aria-label="Object"><option>Page1: TfrxReportPage</option></select>
                <SelectArrow><Arrow /></SelectArrow>
              </ObjectSelect>
              <TabStrip><Tabs items={['Properties', 'Events']} active="Properties" /></TabStrip>
              <Sunken>
                <GridClip>
                  <PropertyTable>
                    <tbody>
                      {properties.map((p) => <PropertyRow key={p[0]} item={p} />)}
                    </tbody>
                  </PropertyTable>
                </GridClip>
                <ScrollBar w={11} size={73} />
              </Sunken>
              <Hint>
                <h2>BackPicture</h2>
                <p>The background page picture</p>
              </Hint>
            </SidePanel>

            <Splitter />

            <Designer>
              <HRuler><Ruler cursor={317} tenths={84} /></HRuler>
              <DesignerBody>
                <VRuler><Ruler vertical cursor={88} tenths={109} /></VRuler>
                <Workspace>
                  <Paper>
                    <Printable>
                      <Grid />
                      <BandStack>
                        <Band kind="ReportTitle" name="ReportTitle1" h={79}>
                          <ReportObject $x={-1} $y={0} $w={60} $h={40}><Dynafact /><Lock /></ReportObject>
                          <ReportObject $x={-1} $y={40} $w={54} $h={13}><Lock /><ObjectText $pad={1}>[Date]</ObjectText></ReportObject>
                          <ReportObject $x={-1} $y={53} $w={54} $h={13}><Lock /><ObjectText $pad={1}>[Time]</ObjectText></ReportObject>
                        </Band>
                        <Band kind="MasterData" name="MasterData1" h={33} source="Job Updating Transactions" />
                        <Band kind="PageFooter" name="PageFooter1" h={33}>
                          <ReportObject $x={203} $y={0} $w={53} $h={13}><Lock /><ObjectText $pad={11}>[Page#] of</ObjectText></ReportObject>
                          <ReportObject $x={255} $y={0} $w={27} $h={13}><Lock /><ObjectText $pad={1}>[Total</ObjectText></ReportObject>
                        </Band>
                      </BandStack>
                    </Printable>
                  </Paper>
                </Workspace>
                <ScrollBar w={12} size={71} />
              </DesignerBody>
            </Designer>

            <PanelGap />

            <SidePanel $w={195}>
              <PanelSpacer />
              <PanelGrip />
              <PanelSpacer $h={4} />
              <TabStrip><Tabs items={['Data', 'Variables', 'Functions', 'Classes']} active="Data" /></TabStrip>
              <Sunken>
                <Tree $h={504}>
                  {dataTree.map((n) => <TreeItem key={n.label} node={n} />)}
                </Tree>
                <ScrollBar w={11} top={4} size={39} />
              </Sunken>
              <Options>
                <Option><Check type="checkbox" defaultChecked />Create field</Option>
                <Option><Check type="checkbox" />Create caption</Option>
                <Option><Check type="checkbox" defaultChecked />Sort by Name</Option>
              </Options>
            </SidePanel>
          </Panels>
        </Right>
      </Body>

      <StatusBar>
        <StatusCell $w={52}>Inches</StatusCell>
        <StatusCell $w={154}>
          <svg width="12" height="10" aria-hidden="true"><path d="M4 0v10M0 2h12" stroke="#aaa69f" /><path d="M5 4h6v5H5z" fill="#cfe2fa" stroke="#9dbbe0" /></svg>
          4.81; 1.34
        </StatusCell>
        <StatusCell>
          Page1
          <Sizer width="9" height="9" aria-hidden="true"><path d="M9 0L0 9M9 3L3 9M9 6L6 9" stroke="#8c8984" /></Sizer>
        </StatusCell>
      </StatusBar>
    </Window>
  );
}
